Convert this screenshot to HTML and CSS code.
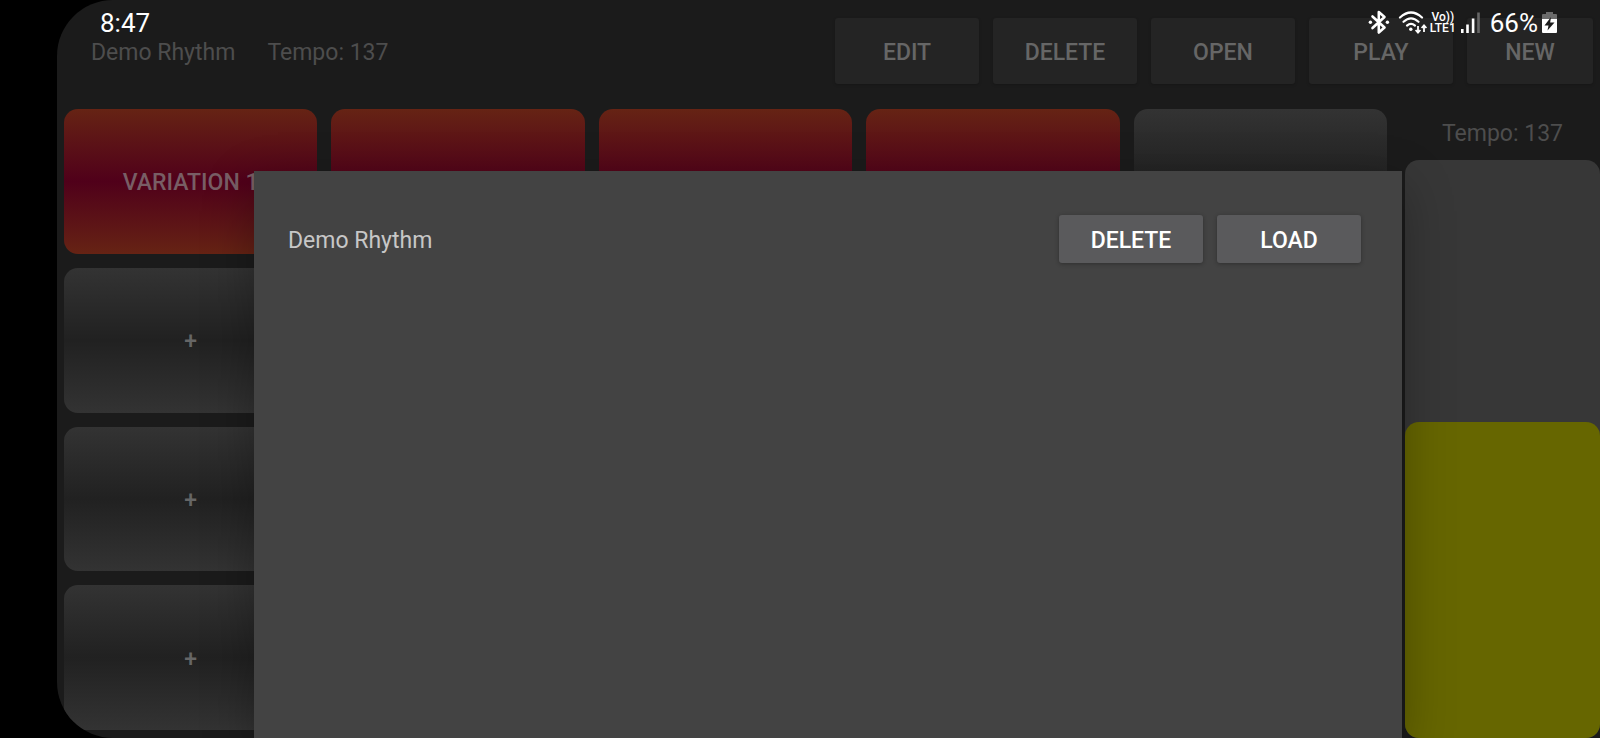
FILE: index.html
```html
<!DOCTYPE html>
<html lang="en">
<head>
    <meta charset="UTF-8">
    <meta name="viewport" content="width=device-width, initial-scale=1.0">
    <title>Demo Rhythm</title>
    <link rel="stylesheet" href="styles.css">
</head>
<body>
    <div class="screen">

        <!-- Phone status bar, drawn over the app -->
        <div class="status-bar">
            <span class="clock">8:47</span>
            <div class="status-icons">
                <svg class="icon-bluetooth" width="22" height="26" viewBox="0 0 22 26">
                    <path d="M4.5 6.5 L16.5 17.5 L10.8 22.5 V2 L16.5 7 L4.5 18" fill="none" stroke="#fff" stroke-width="2.6" stroke-linejoin="round" stroke-linecap="round"/>
                    <circle cx="2.4" cy="12.3" r="1.7" fill="#fff"/>
                    <circle cx="19.4" cy="12.3" r="1.7" fill="#fff"/>
                </svg>
                <svg class="icon-wifi" width="30" height="26" viewBox="0 0 30 26">
                    <g fill="none" stroke="#fff" stroke-width="2.2" stroke-linecap="round">
                        <path d="M2 7.5 Q13 -2.5 24 7.5"/>
                        <path d="M5.5 11.8 Q13 4.8 20.5 11.8"/>
                        <path d="M9 15.6 Q13 12 17 15.6"/>
                    </g>
                    <circle cx="12.8" cy="19.2" r="1.7" fill="#fff"/>
                    <path d="M20 16 V22 M17.6 20 L20 22.6 L22.4 20 M26 22 V16 M23.6 18 L26 15.4 L28.4 18" fill="none" stroke="#fff" stroke-width="1.8"/>
                </svg>
                <span class="volte"><span>Vo))</span><span>LTE1</span></span>
                <svg class="icon-signal" width="20" height="26" viewBox="0 0 20 26">
                    <rect x="0" y="19" width="2.6" height="4" fill="#fff"/>
                    <rect x="5.2" y="14.500" width="2.6" height="8.500" fill="#fff"/>
                    <rect x="10.8" y="8.500" width="2.6" height="14.500" fill="#fff"/>
                    <rect x="16.2" y="2.500" width="2.6" height="20.500" fill="#666"/>
                </svg>
                <span class="percent">66%</span>
                <svg class="icon-battery" width="15" height="24" viewBox="0 0 15 24">
                    <path d="M4 1 H11 V3 H14 Q15 3 15 4 V9 H0 V4 Q0 3 1 3 H4 Z" fill="#6b6b6b"/>
                    <path d="M0 8 H15 V21 Q15 22 14 22 H1 Q0 22 0 21 Z" fill="#fff"/>
                    <path d="M9 6 L2.5 14.5 H6.5 L5.5 19.5 L12.5 11.5 H8.2 Z" fill="#1b1b1b"/>
                </svg>
            </div>
        </div>

        <header class="toolbar">
            <span class="rhythm-name">Demo Rhythm</span>
            <span class="rhythm-tempo">Tempo: 137</span>
            <div class="toolbar-buttons">
                <button type="button" class="tool-btn">EDIT</button>
                <button type="button" class="tool-btn">DELETE</button>
                <button type="button" class="tool-btn">OPEN</button>
                <button type="button" class="tool-btn">PLAY</button>
                <button type="button" class="tool-btn tool-btn-new">NEW</button>
            </div>
        </header>

        <main class="main">
            <div class="pads">
                <button type="button" class="pad active">VARIATION 1</button>
                <button type="button" class="pad active"></button>
                <button type="button" class="pad active"></button>
                <button type="button" class="pad active"></button>
                <button type="button" class="pad"></button>

                <button type="button" class="pad">+</button>
                <button type="button" class="pad"></button>
                <button type="button" class="pad"></button>
                <button type="button" class="pad"></button>
                <button type="button" class="pad"></button>

                <button type="button" class="pad">+</button>
                <button type="button" class="pad"></button>
                <button type="button" class="pad"></button>
                <button type="button" class="pad"></button>
                <button type="button" class="pad"></button>

                <button type="button" class="pad">+</button>
                <button type="button" class="pad"></button>
                <button type="button" class="pad"></button>
                <button type="button" class="pad"></button>
                <button type="button" class="pad"></button>
            </div>

            <div class="tempo">
                <label for="tempo">Tempo: 137</label>
                <div class="tempo-slider">
                    <div class="tempo-fill" style="height: 54.7%"></div>
                    <input type="range" id="tempo" class="tempo-input" min="0" max="250" value="137">
                </div>
            </div>
        </main>

        <!-- Open rhythm dialog -->
        <div class="overlay">
            <div class="dialog" role="dialog">
                <div class="dialog-row">
                    <span class="dialog-name">Demo Rhythm</span>
                    <button type="button" class="dialog-btn">DELETE</button>
                    <button type="button" class="dialog-btn">LOAD</button>
                </div>
            </div>
        </div>

    </div>
</body>
</html>
```
FILE: styles.css
```css
* {
    box-sizing: border-box;
}

body {
    margin: 0;
    padding-left: 57px;  /* camera cutout side */
    background-color: #000;
    font-family: Roboto, 'Liberation Sans', sans-serif;
    font-size: 23px;
}

button {
    padding: 3px 0 0;
    border: none;
    font-family: inherit;
    font-size: 23px;
    font-weight: 500;
}

.screen {
    position: relative;
    display: flex;
    flex-direction: column;
    height: 100vh;
    overflow: hidden;
    background-color: #1b1b1b;
    border-radius: 56px 0 0 56px;
}

/* Status bar */
.status-bar {
    position: absolute;
    top: 0;
    left: 0;
    right: 0;
    z-index: 3;
    display: flex;
    justify-content: space-between;
    align-items: center;
    height: 46px;
    padding: 0 43px;
    color: #fff;
    font-size: 26px;
    pointer-events: none;
}

.status-icons {
    display: flex;
    align-items: center;
}

.icon-wifi {
    margin-left: 8px;
}

.volte {
    display: flex;
    flex-direction: column;
    align-items: center;
    margin: 0 5px 0 2px;
    font-size: 12px;
    line-height: 11px;
    font-weight: 500;
}

.percent {
    margin: 0 4px 0 9px;
}

/* Toolbar */
.toolbar {
    display: flex;
    align-items: center;
    margin: 18px 7px 25px 34px;
    color: #4d4d4d;
}

.rhythm-name,
.rhythm-tempo,
.dialog-name {
    padding-top: 3px;
}

.rhythm-tempo {
    margin-left: 32px;
}

.toolbar-buttons {
    display: flex;
    gap: 14px;
    margin-left: auto;
}

.tool-btn {
    width: 144px;
    height: 66px;
    border-radius: 3px;
    background-color: #242424;
    box-shadow: 0 1px 3px rgba(0, 0, 0, 0.2);
    color: #666;
}

.tool-btn-new {
    width: 126px;
}

/* Pads */
.main {
    flex: 1;
    display: flex;
    gap: 18px;
    padding-left: 7px;
}

.pads {
    flex: 1;
    display: grid;
    grid-template-columns: repeat(5, 1fr);
    grid-template-rows: repeat(4, 1fr);
    gap: 14px;
    padding-bottom: 8px;
}

.pad {
    border-radius: 14px;
    background: linear-gradient(#333, #212121 50%, #333);
    color: #666;
}

.pad.active {
    background: linear-gradient(#662314, #50001a 50%, #662314);
    color: #785e65;
}

/* Tempo slider */
.tempo {
    display: flex;
    flex-direction: column;
    width: 195px;
    color: #4d4d4d;
    text-align: center;
}

.tempo label {
    padding: 11px 0 13px;
    line-height: 27px;
}

.tempo-slider {
    position: relative;
    flex: 1;
    display: flex;
    flex-direction: column;
    justify-content: flex-end;
    border-radius: 14px;
    background-color: #373737;
}

.tempo-fill {
    border-radius: 14px;
    background-color: #660;
}

.tempo-input {
    position: absolute;
    inset: 0;
    width: 100%;
    height: 100%;
    margin: 0;
    opacity: 0;
    writing-mode: vertical-lr;
    direction: rtl;
}

/* Dialog */
.overlay {
    position: absolute;
    inset: 0;
    z-index: 2;
    display: flex;
    padding: 171px 198px 0 197px;
}

.dialog {
    flex: 1;
    padding: 44px 41px 44px 34px;
    background-color: #434343;
    box-shadow: 0 16px 48px rgba(0, 0, 0, 0.3);
}

.dialog-row {
    display: flex;
    align-items: center;
    gap: 14px;
}

.dialog-name {
    flex: 1;
    color: #c7c7c7;
}

.dialog-btn {
    width: 144px;
    height: 48px;
    border-radius: 3px;
    background-color: #5a5a5c;
    box-shadow: 0 1px 4px rgba(0, 0, 0, 0.3);
    color: #fff;
}
```
